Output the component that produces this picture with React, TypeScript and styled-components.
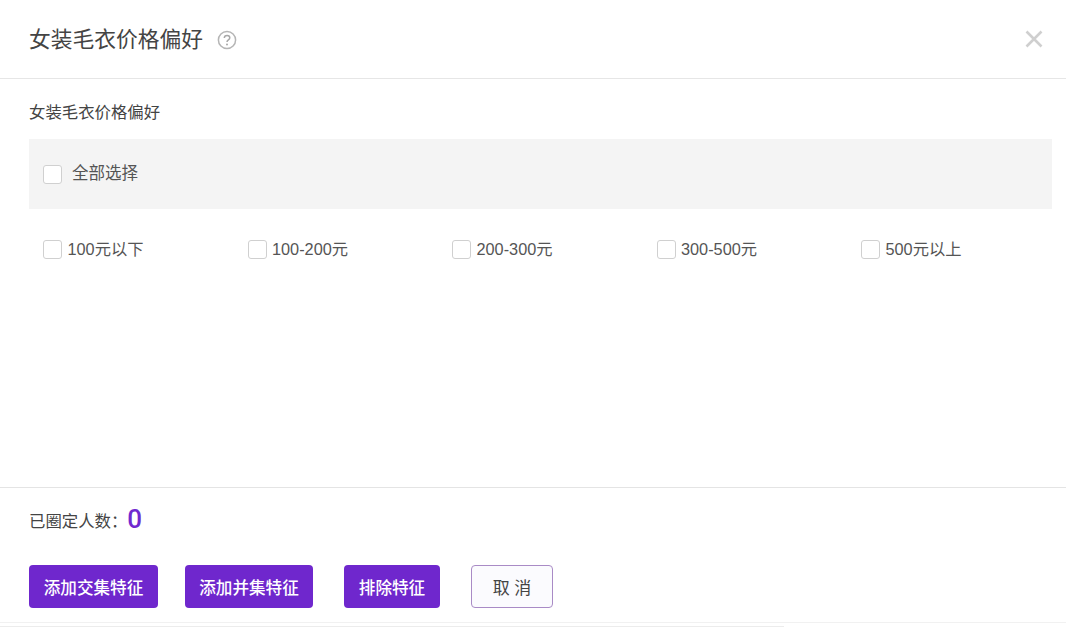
import React from 'react';
import styled, { createGlobalStyle } from 'styled-components';

const FONT = `"Liberation Sans", "Noto Sans CJK SC", sans-serif`;

const options = ['100元以下', '100-200元', '200-300元', '300-500元', '500元以上'];

const GlobalStyle = createGlobalStyle`
  html, body {
    margin: 0;
    padding: 0;
    background: #fff;
  }
  body {
    font-family: ${FONT};
  }
`;

export default function App() {
  return (
    <>
      <GlobalStyle />
      <Dialog>
        <Header>
          <Title>女装毛衣价格偏好</Title>
          <HelpIcon viewBox="0 0 20 20">
            <circle cx="10" cy="10" r="8.6" fill="none" stroke="#b5b5b5" strokeWidth="1.5" />
            <path
              d="M7.3 8c0-1.6 1.2-2.6 2.8-2.6s2.7 1 2.7 2.3c0 2.2-2.8 2.1-2.8 4.3"
              fill="none"
              stroke="#a8a8a8"
              strokeWidth="1.5"
            />
            <circle cx="10" cy="14.4" r="1" fill="#a8a8a8" />
          </HelpIcon>
          <CloseIcon viewBox="0 0 18 18">
            <path d="M1.5 1.5 16.5 16.5M16.5 1.5 1.5 16.5" stroke="#cfcfcf" strokeWidth="2.6" fill="none" />
          </CloseIcon>
        </Header>
        <Body>
          <SectionLabel>女装毛衣价格偏好</SectionLabel>
          <SelectAllBar>
            <Box />
            <SelectAllText>全部选择</SelectAllText>
          </SelectAllBar>
          <OptionGrid>
            {options.map((o) => (
              <Option key={o}>
                <Box />
                <OptionText>{o}</OptionText>
              </Option>
            ))}
          </OptionGrid>
        </Body>
        <Footer>
          <Count>
            <CountLabel>已圈定人数：</CountLabel>
            <CountValue>0</CountValue>
          </Count>
          <Actions>
            <PrimaryButton $width={129}>添加交集特征</PrimaryButton>
            <PrimaryButton $width={128}>添加并集特征</PrimaryButton>
            <ExcludeButton $width={96}>排除特征</ExcludeButton>
            <CancelButton>取 消</CancelButton>
          </Actions>
        </Footer>
        <BottomEdge>
          <BottomEdgeDark />
        </BottomEdge>
      </Dialog>
    </>
  );
}

const Dialog = styled.div`
  width: 1066px;
  height: 628px;
  display: flex;
  flex-direction: column;
  overflow: hidden;
  background: #fff;
`;

const Header = styled.div`
  height: 79px;
  flex: none;
  box-sizing: border-box;
  display: flex;
  align-items: center;
  padding: 0 23px 0 29px;
  border-bottom: 1px solid #e6e6e6;
`;

const Title = styled.h1`
  margin: 1px 0 0;
  font-size: 21.75px;
  line-height: 26px;
  font-weight: 400;
  color: #444;
`;

const HelpIcon = styled.svg`
  width: 20px;
  height: 20px;
  margin-left: 14px;
  margin-top: 1px;
`;

const CloseIcon = styled.svg`
  width: 18px;
  height: 18px;
  margin-left: auto;
`;

const Body = styled.div`
  flex: 1;
  padding: 0 14px 0 29px;
`;

const SectionLabel = styled.div`
  margin-top: 23px;
  font-size: 16.4px;
  line-height: 20px;
  color: #444;
`;

const SelectAllBar = styled.div`
  margin-top: 17px;
  height: 70px;
  display: flex;
  align-items: center;
  padding: 0 0 0 14px;
  background: #f4f4f4;
`;

const Box = styled.span`
  width: 19px;
  height: 19px;
  flex: none;
  box-sizing: border-box;
  background: #fff;
  border: 1px solid #d0d0d0;
  border-radius: 3px;
`;

const SelectAllText = styled.span`
  margin: 0 0 4px 10px;
  font-size: 16.5px;
  color: #555;
`;

const OptionGrid = styled.div`
  margin-top: 31px;
  padding-left: 14px;
  display: grid;
  grid-template-columns: repeat(5, 204.5px);
`;

const Option = styled.label`
  display: flex;
  align-items: center;
  height: 19px;
`;

const OptionText = styled.span`
  margin: 0 0 3px 5.5px;
  font-size: 16.3px;
  color: #555;
`;

const Footer = styled.div`
  height: 140px;
  flex: none;
  box-sizing: border-box;
  padding: 0 29px;
  border-top: 1px solid #e4e4e4;
`;

const Count = styled.div`
  height: 60px;
  display: flex;
  align-items: center;
`;

const CountLabel = styled.span`
  font-size: 16.4px;
  color: #444;
  margin-top: 3px;
`;

const CountValue = styled.span`
  font-family: Roboto, sans-serif;
  font-size: 26px;
  font-weight: 500;
  color: #7029cf;
  margin-top: 1px;
`;

const Actions = styled.div`
  margin-top: 17px;
  display: flex;
  gap: 27px;
  align-items: flex-start;
`;

const PrimaryButton = styled.button<{ $width: number }>`
  width: ${(p) => p.$width}px;
  height: 43px;
  padding: 0;
  border: none;
  border-radius: 4px;
  background: #6f27cd;
  color: #fff;
  font-family: ${FONT};
  font-size: 16.6px;
  font-weight: 500;
`;

const ExcludeButton = styled(PrimaryButton)`
  margin-left: 4px;
`;

const CancelButton = styled.button`
  width: 82px;
  height: 43px;
  margin-left: 4px;
  padding: 0;
  box-sizing: border-box;
  border: 1px solid #a98bc6;
  border-radius: 4px;
  background: #fbfbfe;
  color: #444;
  font-family: ${FONT};
  font-size: 17px;
`;

const BottomEdge = styled.div`
  height: 5px;
  flex: none;
  margin-top: -5px;
  border-top: 1px solid #f1f1f1;
`;

const BottomEdgeDark = styled.div`
  width: 784px;
  height: 1px;
  margin-top: 3px;
  background: #ececec;
`;
